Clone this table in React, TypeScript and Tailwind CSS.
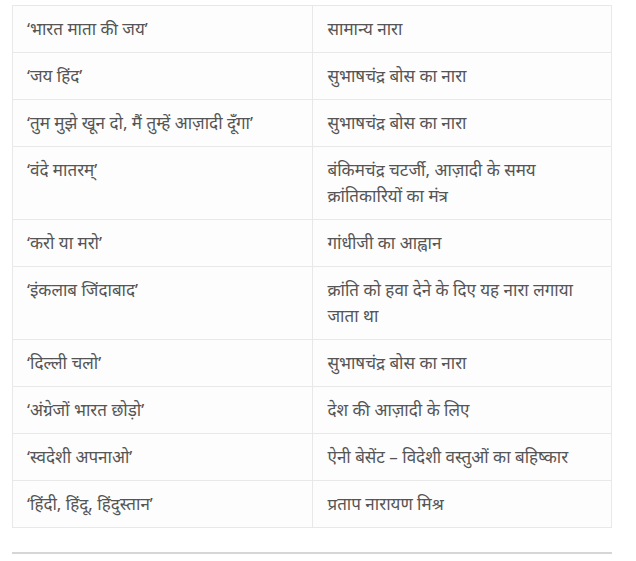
const ROWS: [string, string][] = [
  ['‘भारत माता की जय’', 'सामान्य नारा'],
  ['‘जय हिंद’', 'सुभाषचंद्र बोस का नारा'],
  ['‘तुम मुझे खून दो, मैं तुम्हें आज़ादी दूँगा’', 'सुभाषचंद्र बोस का नारा'],
  ['‘वंदे मातरम्’', 'बंकिमचंद्र चटर्जी, आज़ादी के समय क्रांतिकारियों का मंत्र'],
  ['‘करो या मरो’', 'गांधीजी का आह्वान'],
  ['‘इंकलाब जिंदाबाद’', 'क्रांति को हवा देने के दिए यह नारा लगाया जाता था'],
  ['‘दिल्ली चलो’', 'सुभाषचंद्र बोस का नारा'],
  ['‘अंग्रेजों भारत छोड़ो’', 'देश की आज़ादी के लिए'],
  ['‘स्वदेशी अपनाओ’', 'ऐनी बेसेंट – विदेशी वस्तुओं का बहिष्कार'],
  ['‘हिंदी, हिंदू, हिंदुस्तान’', 'प्रताप नारायण मिश्र'],
];

export default function App() {
  return (
    <div className="min-h-screen bg-white pt-[5px] px-[12px] font-['Noto_Sans',sans-serif] text-[17px] text-[#555555]">
      <table className="w-[600px] table-fixed border-collapse">
        <tbody>
          {ROWS.map(([slogan, note], i) => (
            <tr key={i} className="bg-[#fdfdfd]">
              <td className="border border-[#e8e8e8] align-top pl-[14px] pr-3 py-[10px] leading-[26px]">
                {slogan}
              </td>
              <td className="border border-[#e8e8e8] align-top pl-[15px] pr-3 py-[10px] leading-[26px]">
                {note}
              </td>
            </tr>
          ))}
        </tbody>
      </table>
      <div className="w-[600px] mt-[24px] border-t-2 border-[#d6d6d6]" />
    </div>
  );
}
